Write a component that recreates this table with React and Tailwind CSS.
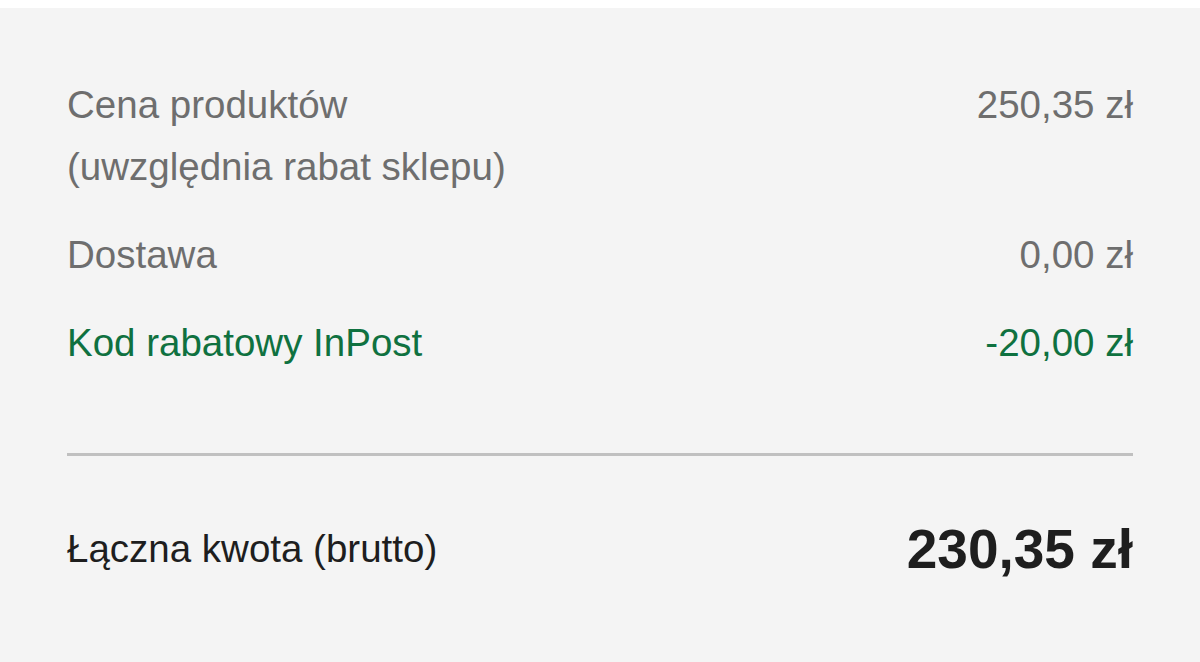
export default function App() {
  return (
    <div className="min-h-[662px] bg-white pt-2 font-['Liberation_Sans',Arial,sans-serif]">
      <section className="min-h-[654px] bg-[#f4f4f4] px-[67px] pt-[66px]">
        <div className="flex flex-col gap-[26px] text-[38.5px] leading-[62px] text-[#6e6e6e]">
          <div className="flex justify-between">
            <div>
              <div>Cena produktów</div>
              <div>(uwzględnia rabat sklepu)</div>
            </div>
            <div>250,35 zł</div>
          </div>
          <div className="flex justify-between">
            <div>Dostawa</div>
            <div>0,00 zł</div>
          </div>
          <div className="flex justify-between text-[#0f7140]">
            <div>Kod rabatowy InPost</div>
            <div>-20,00 zł</div>
          </div>
        </div>
        <div className="mt-[79px] h-[3px] bg-[#c0c0c0]" />
        <div className="mt-[62px] flex items-center justify-between text-[#1e1e1e]">
          <div className="text-[38.5px] leading-[62px]">Łączna kwota (brutto)</div>
          <div className="text-[55px] font-bold leading-[62px]">230,35 zł</div>
        </div>
      </section>
    </div>
  )
}
